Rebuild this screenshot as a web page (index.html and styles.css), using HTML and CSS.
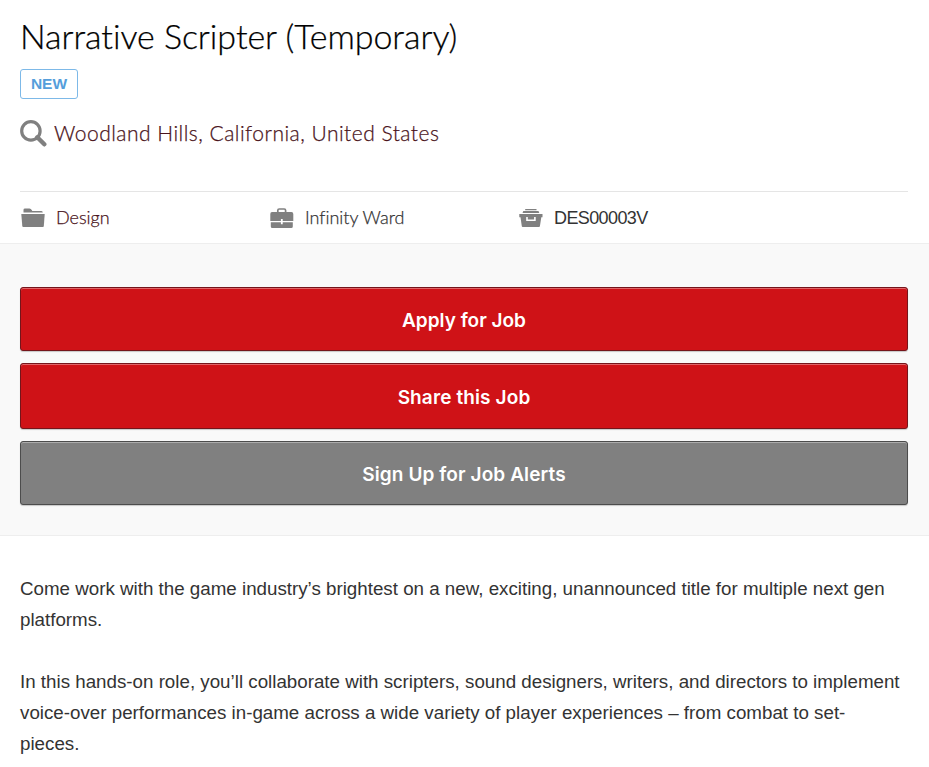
FILE: index.html
```html
<!DOCTYPE html>
<html lang="en">
<head>
  <meta charset="UTF-8">
  <title>Narrative Scripter (Temporary)</title>
  <link rel="stylesheet" href="styles.css">
</head>
<body>
  <header class="job-header">
    <h1 class="job-title">Narrative Scripter (Temporary)</h1>
    <span class="badge">NEW</span>
    <div class="job-location">
      <svg class="icon-search" viewBox="0 0 27 27" width="27" height="27">
        <circle cx="10.9" cy="10.9" r="9.2" fill="none" stroke="#808080" stroke-width="3.2"/>
        <path d="M17.3 17.3L24.3 24.3" stroke="#808080" stroke-width="4.4" stroke-linecap="round"/>
      </svg>
      <a href="#">Woodland Hills, California, United States</a>
    </div>
    <ul class="job-meta">
      <li>
        <svg class="icon" viewBox="0 0 24 20" width="24" height="20">
          <path d="M2.5 4.5V1.8Q2.5.5 4 .5H8.5Q10 .5 10.7 2L11.3 3H20.5Q21.8 3 21.8 4.5z"/>
          <path d="M.3 6H23.7L22.8 18.2Q22.7 19 21.8 19H2.3Q1.4 19 1.3 18.2z"/>
        </svg>
        <a href="#">Design</a>
      </li>
      <li>
        <svg class="icon" viewBox="0 0 24 20" width="24" height="20">
          <path d="M7.8 5V2.4Q7.8 1 9.2 1H14.2Q15.6 1 15.6 2.4V5" fill="none" stroke="#808080" stroke-width="1.7"/>
          <path d="M2 4H21.5Q23.3 4 23.3 6V13H12.7V11H10.9V13H.3V6Q.3 4 2 4z"/>
          <path d="M.8 14.2H10.9V16.2H12.7V14.2H22.8V18.5Q22.8 20 21.3 20H2.3Q.8 20 .8 18.5z"/>
        </svg>
        <span>Infinity Ward</span>
      </li>
      <li>
        <svg class="icon" viewBox="0 0 24 20" width="24" height="20">
          <path d="M6.2 1H17.5V2.2H6.2zM4.3 3H19.5L20.3 5H3.5z"/>
          <path fill-rule="evenodd" d="M.3 6H23.5V9.3H22.3L20.9 18.2Q20.8 19 20 19H3.7Q2.9 19 2.8 18.2L1.5 9.3H.3zM7.2 9V13H16.7V9H15.1V11.4H8.8V9z"/>
        </svg>
        <span class="job-id">DES00003V</span>
      </li>
    </ul>
  </header>

  <section class="job-actions">
    <a class="btn btn-apply" href="#">Apply for Job</a>
    <a class="btn btn-share" href="#">Share this Job</a>
    <a class="btn btn-alerts" href="#">Sign Up for Job Alerts</a>
  </section>

  <section class="job-description">
    <p>Come work with the game industry’s brightest on a new, exciting, unannounced title for multiple next gen platforms.</p>
    <p>In this hands-on role, you’ll collaborate with scripters, sound designers, writers, and directors to implement voice-over performances in-game across a wide variety of player experiences – from combat to set-pieces.</p>
  </section>
</body>
</html>
```
FILE: styles.css
```css
* { box-sizing: border-box; }
body {
  margin: 0;
  background: #fff;
  color: #333;
  font-family: "Liberation Sans", Arial, sans-serif;
  overflow: hidden;
}
a { color: #4a141b; text-decoration: none; }

/* --- HEADER --- */
.job-header {
  height: 243px;
  padding: 16px 21px 0 20px;
  font-family: Lato, sans-serif;
  font-weight: 300;
  font-variant-ligatures: none;
  -webkit-text-stroke: 0.25px currentColor;
}
.job-title {
  margin: 0 0 13px;
  color: #000;
  font-size: 34px;
  font-weight: 300;
  line-height: 40px;
  letter-spacing: -0.04px;
}
.badge {
  display: flex;
  align-items: center;
  justify-content: center;
  width: 58px;
  height: 30px;
  padding-bottom: 1px;
  border: 1px solid #7db9e8;
  border-radius: 3px;
  color: #559edb;
  font-family: "Liberation Sans", Arial, sans-serif;
  font-size: 15.5px;
  font-weight: bold;
  -webkit-text-stroke: 0;
}
.job-location {
  display: flex;
  align-items: center;
  height: 28px;
  margin-top: 20px;
  font-size: 21px;
  letter-spacing: 0.48px;
}
.job-location a { padding-bottom: 1px; }
.icon-search { margin-right: 7px; }
.job-meta {
  display: grid;
  grid-template-columns: 249px 249px 1fr;
  margin: 44px 0 0;
  padding: 0;
  border-top: 1px solid #e5e5e5;
  list-style: none;
  font-size: 18px;
}
.job-meta li {
  display: flex;
  align-items: center;
  height: 51px;
  padding-left: 1px;
}
.job-meta a, .job-meta span { padding-bottom: 1px; }
.icon { margin-right: 11px; fill: #808080; }
.job-meta .job-id {
  padding: 1px 0 0;
  font-family: "Liberation Sans", Arial, sans-serif;
  letter-spacing: -0.6px;
  -webkit-text-stroke: 0;
}

/* --- BUTTONS --- */
.job-actions {
  display: flex;
  flex-direction: column;
  gap: 12px;
  height: 293px;
  padding: 43px 21px 0 20px;
  border-top: 1px solid #eee;
  border-bottom: 1px solid #eee;
  background: #f9f9f9;
}
.btn {
  display: flex;
  align-items: center;
  justify-content: center;
  height: 64px;
  padding-top: 2px;
  border: 1px solid #75151b;
  border-radius: 3px;
  background: #cf1217;
  box-shadow: inset 0 1px 0 rgba(255, 255, 255, 0.35), 0 1px 1px rgba(0, 0, 0, 0.2);
  color: #fff;
  font-family: Inter, sans-serif;
  font-size: 19px;
  font-weight: 600;
}
.btn-share { height: 66px; letter-spacing: 0.12px; }
.btn-alerts { border-color: #4c4c4c; background: #808080; letter-spacing: 0.1px; }

/* --- DESCRIPTION --- */
.job-description {
  padding: 37px 27px 0 20px;
  font-size: 18.75px;
  line-height: 31px;
}
.job-description p { margin: 0 0 31px; }
```
